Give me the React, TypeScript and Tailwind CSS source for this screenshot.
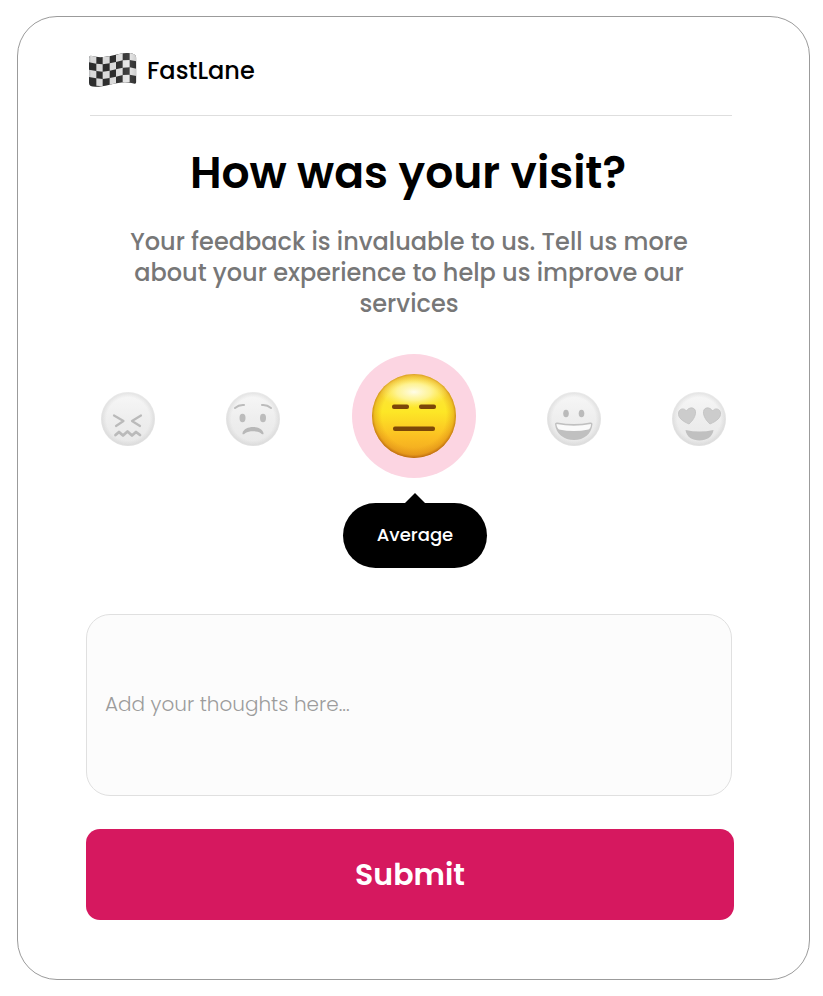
import { useState } from 'react';
import type { ReactNode } from 'react';

interface FaceProps {
  children: ReactNode;
}

// column edges of the flag and the height of the cloth's top hem at each of them
const FLAG_X = [27, 49, 68, 89, 108, 128, 149, 169];
const FLAG_Y = [43, 47, 49, 46, 42, 37, 36, 40];
const FLAG_ROW = 22;

function FlagIcon() {
  const cells = [];
  for (let col = 0; col < 7; col++) {
    for (let row = 0; row < 4; row++) {
      if ((col + row) % 2) continue;
      const x1 = FLAG_X[col];
      const x2 = FLAG_X[col + 1];
      const y1 = FLAG_Y[col] + row * FLAG_ROW;
      const y2 = FLAG_Y[col + 1] + row * FLAG_ROW;
      cells.push(
        <polygon
          key={`${col}-${row}`}
          points={`${x1},${y1} ${x2},${y2} ${x2},${y2 + FLAG_ROW} ${x1},${y1 + FLAG_ROW}`}
          fill="#e6e6e6"
        />
      );
    }
  }

  return (
    <svg viewBox="24 34 150 108" className="w-[50px] h-9" aria-hidden="true">
      <defs>
        <clipPath id="cloth">
          <path d="M27 53Q27 43 36 46C74 57 106 38 140 37Q168 36 169 51V123Q169 132 158 128C118 118 92 137 56 138Q27 141 27 127Z" />
        </clipPath>
        <linearGradient id="fold">
          <stop offset="0" stopColor="#4a5a66" stopOpacity="0.35" />
          <stop offset="0.06" stopColor="#000" stopOpacity="0.06" />
          <stop offset="0.5" stopColor="#000" stopOpacity="0.05" />
          <stop offset="0.8" stopColor="#fff" stopOpacity="0.08" />
          <stop offset="1" stopColor="#000" stopOpacity="0.15" />
        </linearGradient>
      </defs>
      <g clipPath="url(#cloth)">
        <rect x="24" y="34" width="150" height="108" fill="#303030" />
        {cells}
        <rect x="24" y="34" width="150" height="108" fill="url(#fold)" />
      </g>
    </svg>
  );
}

function GrayFace({ children }: FaceProps) {
  return (
    <svg viewBox="0 0 54 54" className="w-[54px] h-[54px]" aria-hidden="true">
      <circle cx="27" cy="27" r="27" fill="url(#gray-face)" />
      <circle cx="27" cy="27" r="27" fill="url(#gray-rim)" />
      {children}
    </svg>
  );
}

function ConfoundedFace() {
  return (
    <GrayFace>
      <g fill="none" stroke="#bababa" strokeWidth="2.2" strokeLinecap="round" strokeLinejoin="round">
        <path d="M13 23.5L22.5 29L15 34" />
        <path d="M40 23.5L31 29L39 34" />
        <path d="M14.5 43L18 40L22 43.5L26.5 39.5L31 43.5L35 40L39 43" strokeWidth="2.8" />
      </g>
    </GrayFace>
  );
}

function WorriedFace() {
  return (
    <GrayFace>
      <ellipse cx="16.5" cy="26" rx="3" ry="4.2" fill="#bcbcbc" />
      <ellipse cx="37" cy="26" rx="3" ry="4.2" fill="#bcbcbc" />
      <g fill="none" stroke="#bcbcbc" strokeWidth="2" strokeLinecap="round">
        <path d="M9 16Q13 12.5 18 13" />
        <path d="M45 16Q41 12.5 36 13" />
      </g>
      <path d="M16.5 41C18.5 33 35.5 33 37.5 41C37.8 43 36 42.5 34.5 41C31 38.5 23 38.5 19.5 41C18 42.5 16.2 43 16.5 41Z" fill="#b8b8b8" />
    </GrayFace>
  );
}

function GrinningFace() {
  return (
    <GrayFace>
      <ellipse cx="19" cy="21.5" rx="2.8" ry="3.8" fill="#bababa" />
      <ellipse cx="34.5" cy="21.5" rx="2.8" ry="3.8" fill="#bababa" />
      <path d="M8 32Q8 30 10.5 30.5Q27 33.5 43 30.5Q45.5 30 45.5 32C44.5 42 37 48 27 48S9 42 8 32Z" fill="#c0c0c0" />
      <path d="M9.5 32Q27 35.5 44 32C44 35 43 36.5 41.5 37.5Q27 40.5 12 37.5C11 36.5 9.5 35 9.5 32Z" fill="#fafafa" />
    </GrayFace>
  );
}

function HeartEyesFace() {
  return (
    <GrayFace>
      <g fill="#cccccc" stroke="#c0c0c0" strokeWidth="0.8">
        <path d="M17 32C10 29 6 25.5 6.5 21C7 16.5 12 15.5 14.5 19C17 14.5 23 15 23.5 19.5C24 24 20.5 29 17 32Z" />
        <path d="M38 32C45 29 49 25.5 48.5 21C48 16.5 43 15.5 40.5 19C38 14.5 32 15 31.5 19.5C31 24 34.5 29 38 32Z" />
      </g>
      <path d="M13.5 38Q27.5 41 41.5 38C40.5 45 34.5 48.5 27.5 48.5S14.5 45 13.5 38Z" fill="#c0c0c0" />
    </GrayFace>
  );
}

function ExpressionlessFace() {
  return (
    <svg viewBox="0 0 84 84" className="w-[84px] h-[84px]" aria-hidden="true">
      <defs>
        <linearGradient id="yellow-face" x1="0" y1="0" x2="0" y2="1">
          <stop offset="0" stopColor="#fde04a" />
          <stop offset="0.45" stopColor="#fde726" />
          <stop offset="0.75" stopColor="#fbbf22" />
          <stop offset="1" stopColor="#f0a41f" />
        </linearGradient>
        <radialGradient id="yellow-rim" cx="0.5" cy="0.49" r="0.51">
          <stop offset="0.75" stopColor="#d98212" stopOpacity="0" />
          <stop offset="0.92" stopColor="#d07a12" stopOpacity="0.35" />
          <stop offset="1" stopColor="#a9560b" stopOpacity="0.8" />
        </radialGradient>
        <radialGradient id="yellow-shine">
          <stop offset="0" stopColor="#fffef2" stopOpacity="0.95" />
          <stop offset="0.5" stopColor="#fffcc8" stopOpacity="0.65" />
          <stop offset="1" stopColor="#fff27a" stopOpacity="0" />
        </radialGradient>
      </defs>
      <circle cx="42" cy="42" r="42" fill="url(#yellow-face)" />
      <circle cx="42" cy="42" r="42" fill="url(#yellow-rim)" />
      <ellipse cx="42" cy="18" rx="34" ry="16" fill="url(#yellow-shine)" />
      <g fill="#7c4708">
        <rect x="20" y="30.5" width="17" height="4.5" rx="2" />
        <rect x="47" y="30.5" width="17" height="4.5" rx="2" />
        <rect x="21" y="52.5" width="42" height="4.5" rx="2" />
      </g>
    </svg>
  );
}

const ratings = [
  { value: 'terrible', label: 'Terrible', Face: ConfoundedFace },
  { value: 'bad', label: 'Bad', Face: WorriedFace },
  { value: 'average', label: 'Average', Face: ExpressionlessFace },
  { value: 'good', label: 'Good', Face: GrinningFace },
  { value: 'excellent', label: 'Excellent', Face: HeartEyesFace },
];

export default function App() {
  const [rating, setRating] = useState('average');
  const [thoughts, setThoughts] = useState('');

  const current = ratings.find((item) => item.value === rating);

  return (
    <div className="min-h-screen bg-white pt-4 pb-4 pl-[17px] pr-[13px] font-['Poppins',sans-serif]">
      <svg className="absolute w-0 h-0" aria-hidden="true">
        <defs>
          <linearGradient id="gray-face" x1="0" y1="0" x2="0" y2="1">
            <stop offset="0" stopColor="#f7f7f7" />
            <stop offset="0.5" stopColor="#eeeeee" />
            <stop offset="1" stopColor="#e8e8e8" />
          </linearGradient>
          <radialGradient id="gray-rim">
            <stop offset="0.8" stopColor="#c8c8c8" stopOpacity="0" />
            <stop offset="0.95" stopColor="#c8c8c8" stopOpacity="0.35" />
            <stop offset="1" stopColor="#d8d8d8" stopOpacity="0.4" />
          </radialGradient>
        </defs>
      </svg>

      <main className="border border-[#9b9b9b] rounded-[40px] pt-[35px] pb-[59px] pl-[68px] pr-[75px]">
        <header>
          <div className="flex items-center gap-[9px] pl-0.5">
            <FlagIcon />
            <span className="pt-0.5 text-[24px] leading-[34px] font-medium text-black">FastLane</span>
          </div>
          <hr className="mt-[27px] ml-1 mr-0.5 border-[#dedede]" />
        </header>

        <form onSubmit={(e) => e.preventDefault()}>
          <div className="text-center">
            <h1 className="mt-[27px] pr-1 text-[44px] leading-[60px] font-semibold text-black">
              How was your visit?
            </h1>
            <p className="mt-[23px] pr-0.5 mx-auto max-w-[580px] text-[24px] leading-[31px] font-medium text-[#777777]">
              Your feedback is invaluable to us. Tell us more about your experience to help us improve our services
            </p>
          </div>

          <div
            role="radiogroup"
            aria-label="Rating"
            className="mt-[35px] ml-[15px] mr-2 flex items-center justify-between"
          >
            {ratings.map(({ value, label, Face }) => (
              <label
                key={value}
                className={
                  value === rating
                    ? 'flex items-center justify-center w-[124px] h-[124px] rounded-full bg-[#fcd5e2] cursor-pointer'
                    : 'mt-1.5 cursor-pointer'
                }
              >
                <input
                  type="radio"
                  name="rating"
                  value={value}
                  checked={value === rating}
                  onChange={() => setRating(value)}
                  aria-label={label}
                  className="sr-only"
                />
                <Face />
              </label>
            ))}
          </div>

          <div className="mt-[15px] ml-[10px] flex flex-col items-center">
            <svg viewBox="0 0 20 10" className="w-5 h-[10px]" aria-hidden="true">
              <path d="M10 0L20 10H0Z" fill="#000" />
            </svg>
            <output className="flex items-center justify-center w-36 h-[65px] pb-0.5 rounded-full bg-black text-white text-[18px] font-medium">
              {current?.label}
            </output>
          </div>

          <div className="mt-[46px] pr-0.5">
            <textarea
              value={thoughts}
              onChange={(e) => setThoughts(e.target.value)}
              aria-label="Your thoughts"
              placeholder="Add your thoughts here..."
              className="block w-full h-[182px] px-[18px] pt-[74px] resize-none rounded-[24px] border border-[#e0e0e0] bg-[#fcfcfc] text-[20px] leading-[30px] font-light text-gray-800 placeholder:text-[#9c9c9c]"
            />
          </div>

          <button
            type="submit"
            className="mt-[33px] w-full h-[91px] rounded-[14px] bg-[#d6185f] text-white text-[30px] font-semibold"
          >
            Submit
          </button>
        </form>
      </main>
    </div>
  );
}
